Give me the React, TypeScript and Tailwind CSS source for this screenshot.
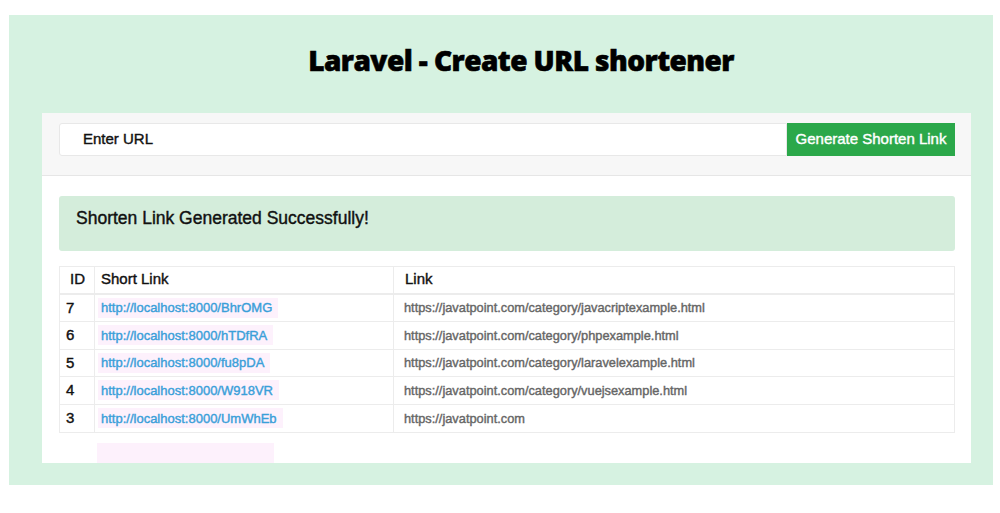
import React from "react";

const rows = [
  { id: 7, short: "http://localhost:8000/BhrOMG", link: "https://javatpoint.com/category/javacriptexample.html" },
  { id: 6, short: "http://localhost:8000/hTDfRA", link: "https://javatpoint.com/category/phpexample.html" },
  { id: 5, short: "http://localhost:8000/fu8pDA", link: "https://javatpoint.com/category/laravelexample.html" },
  { id: 4, short: "http://localhost:8000/W918VR", link: "https://javatpoint.com/category/vuejsexample.html" },
  { id: 3, short: "http://localhost:8000/UmWhEb", link: "https://javatpoint.com" },
];

export default function App() {
  return (
    <div className="w-[1000px] h-[513px] bg-white pt-[15px] pl-[9px] overflow-hidden [-webkit-text-stroke:0.4px_currentColor]" style={{ fontFamily: '"Liberation Sans", Arial, sans-serif' }}>
      <div className="w-[984px] h-[470px] bg-[#d6f2e1] flex flex-col">
        <div className="h-[98px] flex justify-center pt-[26px]">
          <h1 className="text-[28px] leading-[38px] font-extrabold text-black tracking-[-0.55px] pl-[40px] [-webkit-text-stroke:0.6px_#000]" style={{ fontFamily: '"Open Sans", Lato, sans-serif' }}>
            Laravel - Create URL shortener
          </h1>
        </div>
        <div className="ml-[33px] w-[929px] h-[350px] bg-white flex flex-col">
          <div className="h-[67px] bg-[#f7f7f7] border-b border-[#e6e6e6] pt-[10px] pl-[17px] pr-[16px]">
            <div className="flex h-[33px]">
              <div className="flex-1 bg-white border border-[#e8e8e8] rounded-l-[3px] flex items-center pl-[23px] text-[15px] text-[#111]">
                Enter URL
              </div>
              <div className="w-[168px] bg-[#2ba84a] text-white text-[15px] flex items-center justify-center">
                Generate Shorten Link
              </div>
            </div>
          </div>
          <div className="pt-[20px] pl-[17px] pr-[16px] flex flex-col">
            <div className="h-[55px] bg-[#d4eddb] rounded-[3px] pl-[17px] pt-[9px] text-[17.5px] text-[#111]">
              Shorten Link Generated Successfully!
            </div>
            <div className="mt-[15px] border border-[#ececec]">
              <div className="flex h-[28px] border-b-2 border-[#ececec] text-[15px] text-[#111]">
                <div className="w-[35px] border-r border-[#ececec] flex items-center justify-center pl-[1px]">ID</div>
                <div className="w-[299px] border-r border-[#ececec] flex items-center pl-[6px]">Short Link</div>
                <div className="flex-1 flex items-center pl-[11px]">Link</div>
              </div>
              {rows.map((r, i) => (
                <div key={r.id} className={`flex h-[27.5px] ${i < rows.length - 1 ? "border-b border-[#ececec]" : ""}`}>
                  <div className="w-[35px] border-r border-[#ececec] flex items-center pl-[6px] text-[15px] text-[#111]">{r.id}</div>
                  <div className="w-[299px] border-r border-[#ececec] flex items-center pl-[3px]">
                    <span className="bg-[#fdf1fc] h-[20px] flex items-center px-[3px] pr-[6px] text-[13px] text-[#3a9fd9]">{r.short}</span>
                  </div>
                  <div className="flex-1 flex items-center pl-[10px] text-[12.8px] text-[#666]">{r.link}</div>
                </div>
              ))}
            </div>
            <div className="ml-[38px] mt-[10px] w-[177px] h-[20px] bg-[#fdf1fc]" />
          </div>
        </div>
      </div>
    </div>
  );
}
